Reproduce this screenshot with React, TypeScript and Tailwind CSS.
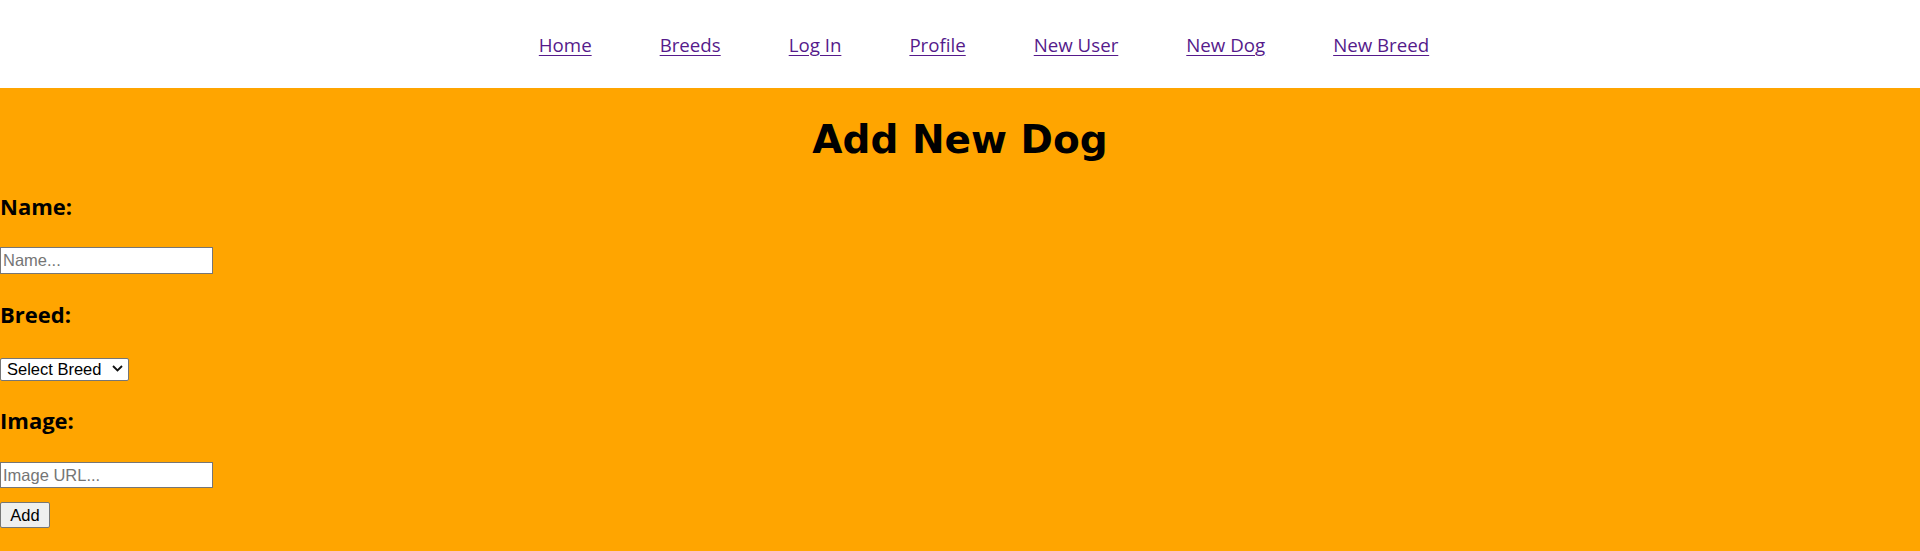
import React from 'react'

const links = ['Home', 'Breeds', 'Log In', 'Profile', 'New User', 'New Dog', 'New Breed']

export default function App() {
  return (
    <div className="min-h-[551px] bg-[#ffa500]">
      {/* Top nav */}
      <nav className="h-[88px] bg-white flex items-center justify-center gap-[68px] pl-[48px] pt-[2px]">
        {links.map((l) => (
          <a
            key={l}
            href="#"
            className="text-[18.7px] text-[#551a8b] underline underline-offset-[3px] decoration-1 font-['Open_Sans',sans-serif] leading-none"
          >
            {l}
          </a>
        ))}
      </nav>

      {/* Form */}
      <main className="pt-[28px] pb-[23px]">
        <h1 className="text-center text-[39px] leading-[48px] font-bold text-black font-['DejaVu_Sans',sans-serif]">
          Add New Dog
        </h1>

        <form className="flex flex-col items-start font-['Open_Sans',sans-serif]" onSubmit={(e) => e.preventDefault()}>
          <label className="mt-[27px] text-[22px] leading-[30px] font-bold text-black">Name:</label>
          <input
            type="text"
            placeholder="Name..."
            className="mt-[26px] w-[213px] h-[27px] bg-white border border-[#767676] px-[2px] text-[16.5px] text-black placeholder:text-[#757575] font-['Liberation_Sans',Arial,sans-serif] outline-none"
          />

          <label className="mt-[25px] text-[22px] leading-[30px] font-bold text-black">Breed:</label>
          <div className="relative mt-[28px]">
            <select
              defaultValue=""
              className="appearance-none w-[129px] h-[23px] bg-white border border-[#767676] rounded-[2px] pl-[6px] text-[16.5px] leading-none text-black font-['Liberation_Sans',Arial,sans-serif] outline-none"
            >
              <option value="">Select Breed</option>
            </select>
            <svg
              className="absolute right-[6px] top-[8px] pointer-events-none"
              width="11"
              height="7"
              viewBox="0 0 11 7"
              fill="none"
            >
              <path d="M1 1l4.5 4.5L10 1" stroke="#111" strokeWidth="1.8" />
            </svg>
          </div>

          <label className="mt-[24px] text-[22px] leading-[30px] font-bold text-black">Image:</label>
          <input
            type="text"
            placeholder="Image URL..."
            className="mt-[27px] w-[213px] h-[26px] bg-white border border-[#767676] px-[2px] text-[16.5px] text-black placeholder:text-[#757575] font-['Liberation_Sans',Arial,sans-serif] outline-none"
          />

          <button
            type="submit"
            className="mt-[14px] w-[50px] h-[26px] bg-[#efefef] border border-[#767676] rounded-[2px] text-[16.5px] text-black font-['Liberation_Sans',Arial,sans-serif]"
          >
            Add
          </button>
        </form>
      </main>
    </div>
  )
}
